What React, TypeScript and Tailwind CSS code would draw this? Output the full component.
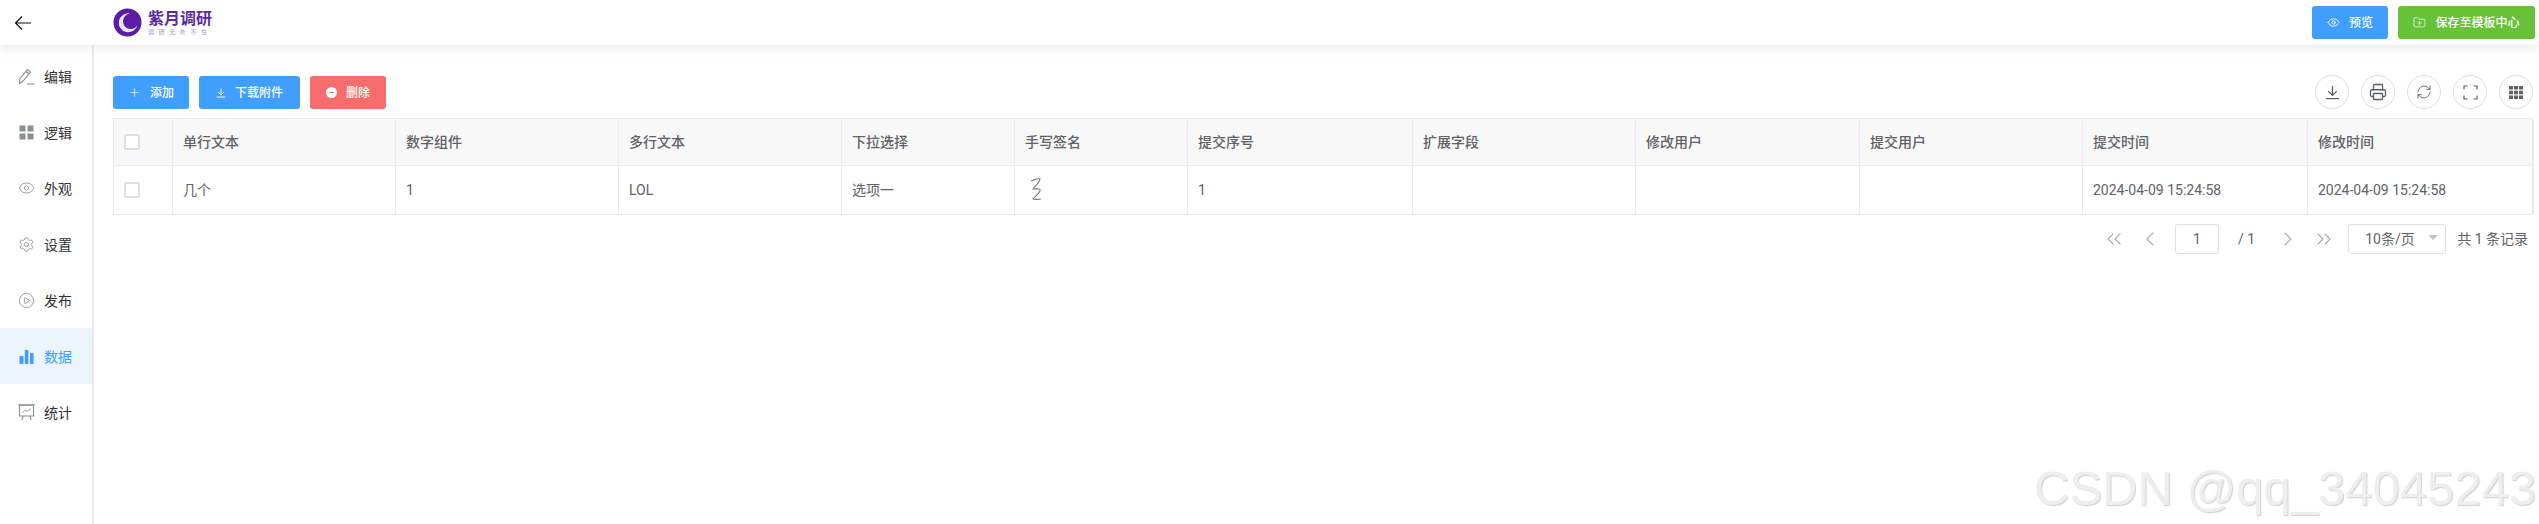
import type { ReactNode } from "react";
import { ChevronLeft, ChevronRight, ChevronsLeft, ChevronsRight, CirclePlay, Eye, FolderPlus, Plus, Printer, RefreshCw, Settings } from "lucide-react";

const FONT = "font-['Roboto','Noto_Sans_CJK_SC',sans-serif]";
const COLS = "grid-cols-[59px_223px_223px_223px_173px_173px_225px_223px_224px_223px_225px_226px]";

function PencilIcon() {
  return (
    <svg width="17" height="17" viewBox="0 0 17 17" fill="none" stroke="#8a8d93" strokeWidth="1.1">
      <path d="M1.5 15.5 2 10.5 9.5 1.5 12.5 4 5 13 1.5 15.5Z" />
      <path d="M8 3.5 11 6" />
      <path d="M9 16h7.5" />
    </svg>
  );
}

function GridIcon() {
  return (
    <svg width="15" height="15" viewBox="0 0 15 15" fill="#8a8d93">
      <rect x="0.5" y="0.5" width="6" height="6" />
      <rect x="8.5" y="0.5" width="6" height="6" />
      <rect x="0.5" y="8.5" width="6" height="6" />
      <rect x="8.5" y="8.5" width="6" height="6" />
    </svg>
  );
}

function BarsIcon() {
  return (
    <svg width="15" height="15" viewBox="0 0 15 15" fill="#409eff">
      <rect x="0.5" y="7" width="4" height="8" />
      <rect x="5.8" y="1" width="3.6" height="14" />
      <rect x="11" y="4" width="3.6" height="11" />
    </svg>
  );
}

function BoardIcon() {
  return (
    <svg width="17" height="17" viewBox="0 0 17 17" fill="none" stroke="#8a8d93" strokeWidth="1.1">
      <path d="M0.5 1h16" strokeWidth="1.6" />
      <path d="M1.5 1v11h14V1" />
      <path d="M4 9l3-3 2 1.5 4-3" strokeWidth="0.8" />
      <path d="M5 12l-1 4M12 12l1 4" />
    </svg>
  );
}

function ArrowDownLine({ size, strokeWidth }: { size: number; strokeWidth: number }) {
  return (
    <svg width={size} height={size} viewBox="0 0 16 16" fill="none" stroke="currentColor" strokeWidth={strokeWidth}>
      <path d="M8 1v9.5M3.5 6.5 8 11l4.5-4.5" />
      <path d="M1 14.5h14" />
    </svg>
  );
}

function Corners() {
  return (
    <svg width="15" height="15" viewBox="0 0 15 15" fill="none" stroke="currentColor" strokeWidth="1.2">
      <path d="M1 4.5V1h3.5M10.5 1H14v3.5M14 10.5V14h-3.5M4.5 14H1v-3.5" />
    </svg>
  );
}

function MoonLogo() {
  return (
    <svg width="29" height="29" viewBox="0 0 29 29">
      <circle cx="14.5" cy="14.5" r="14" fill="#5a1ea6" />
      <path d="M17 5.5A9.5 9.5 0 1 0 24.5 17 8 8 0 0 1 17 21 7.8 7.8 0 0 1 10 13 7.8 7.8 0 0 1 17 5.5Z" fill="#ece4f7" />
    </svg>
  );
}

function Signature() {
  return (
    <svg width="22" height="30" viewBox="0 0 22 30" fill="none" stroke="#777" strokeWidth="1.1">
      <path d="M6 6C9 5 13 3 15 4 15 7 10 11 8 14 11 14 16 13 15 16 13 20 9 22 8 24 11 25 14 24 16 24" />
    </svg>
  );
}

const NAV: { label: string; icon: ReactNode; active?: boolean }[] = [
  { label: "编辑", icon: <PencilIcon /> },
  { label: "逻辑", icon: <GridIcon /> },
  { label: "外观", icon: <Eye size={18} strokeWidth={1.2} color="#8a8d93" /> },
  { label: "设置", icon: <Settings size={17} strokeWidth={1.2} color="#8a8d93" /> },
  { label: "发布", icon: <CirclePlay size={17} strokeWidth={1.2} color="#8a8d93" /> },
  { label: "数据", icon: <BarsIcon />, active: true },
  { label: "统计", icon: <BoardIcon /> },
];

const COLUMNS = ["单行文本", "数字组件", "多行文本", "下拉选择", "手写签名", "提交序号", "扩展字段", "修改用户", "提交用户", "提交时间", "修改时间"];

function Checkbox() {
  return <span className="h-4 w-4 rounded-[2px] border-2 border-[#dcdfe6] bg-white" />;
}

function Cell({ children, head }: { children?: ReactNode; head?: boolean }) {
  return (
    <div className={`flex items-center border-r border-[#e8eaec] px-[10px] text-[14px] text-[#606266] last:border-r-2 ${head ? "font-medium" : ""}`}>
      {children}
    </div>
  );
}

function ToolButton({ children }: { children: ReactNode }) {
  return <button className="flex h-[34px] w-[34px] items-center justify-center rounded-full border border-[#dcdfe6] bg-white text-[#5a5d63]">{children}</button>;
}

function ActionButton({ color, width, icon, label }: { color: string; width: string; icon: ReactNode; label: string }) {
  return (
    <button className={`flex h-[33px] items-center justify-center gap-[9px] rounded-[3px] text-[12px] font-medium text-white ${color} ${width}`}>
      {icon}
      <span>{label}</span>
    </button>
  );
}

export default function App() {
  return (
    <div className={`relative flex h-[524px] w-[2539px] flex-col overflow-hidden bg-white ${FONT}`}>
      <header className="z-10 flex h-[45px] shrink-0 items-center bg-white pr-1 shadow-[0_2px_12px_rgba(0,0,0,0.1)]">
        <div className="flex w-[113px] shrink-0 pl-[14px]">
          <svg width="18" height="16" viewBox="0 0 18 16" fill="none" stroke="#111" strokeWidth="1.2">
            <path d="M17 8H1.5M8 1.5 1.5 8 8 14.5" />
          </svg>
        </div>
        <MoonLogo />
        <div className="ml-[6px] flex w-[64px] flex-col">
          <span className="text-[16px] leading-[18px] font-bold text-[#5a2ca0]">紫月调研</span>
          <span className="text-[6px] leading-[7px] tracking-[4.6px] whitespace-nowrap text-[#a98fd0]">调研无处不在</span>
        </div>
        <div className="ml-auto flex gap-[10px]">
          <ActionButton color="bg-[#409eff]" width="w-[76px]" icon={<Eye size={13} strokeWidth={1.6} />} label="预览" />
          <ActionButton color="bg-[#67c23a]" width="w-[137px]" icon={<FolderPlus size={13} strokeWidth={1.3} />} label="保存至模板中心" />
        </div>
      </header>

      <div className="flex min-h-0 flex-1">
        <aside className="w-[94px] shrink-0 border-r-2 border-[#ebebeb] pt-[3px]">
          {NAV.map((item) => (
            <div key={item.label} className={`flex h-[56px] items-center gap-[9px] pl-[18px] text-[14px] ${item.active ? "bg-[#ecf5ff] text-[#409eff]" : "text-[#303133]"}`}>
              <span className="flex w-[17px] justify-center">{item.icon}</span>
              <span className="pt-[2px]">{item.label}</span>
            </div>
          ))}
        </aside>

        <main className="min-w-0 flex-1 pt-[30px] pr-[6px] pl-[19px]">
          <div className="flex items-center justify-between">
            <div className="flex gap-[10px] pt-px">
              <ActionButton color="bg-[#409eff]" width="w-[76px]" icon={<Plus size={13} strokeWidth={1.4} />} label="添加" />
              <ActionButton color="bg-[#409eff]" width="w-[101px]" icon={<ArrowDownLine size={10} strokeWidth={1.5} />} label="下载附件" />
              <ActionButton
                color="bg-[#f76c6c]"
                width="w-[76px]"
                icon={<span className="flex h-[11px] w-[11px] items-center justify-center rounded-full bg-white"><span className="h-px w-[5px] bg-[#f76c6c]" /></span>}
                label="删除"
              />
            </div>
            <div className="flex gap-[12px]">
              <ToolButton><ArrowDownLine size={15} strokeWidth={1.3} /></ToolButton>
              <ToolButton><Printer size={18} strokeWidth={1.7} /></ToolButton>
              <ToolButton><RefreshCw size={16} strokeWidth={1.3} /></ToolButton>
              <ToolButton><Corners /></ToolButton>
              <ToolButton>
                <svg width="14" height="13" viewBox="0 0 14 13" fill="#606266">
                  <path d="M0 0h4v3.5H0zM5 0h4v3.5H5zM10 0h4v3.5h-4zM0 4.7h4v3.5H0zM5 4.7h4v3.5H5zM10 4.7h4v3.5h-4zM0 9.5h4V13H0zM5 9.5h4V13H5zM10 9.5h4V13h-4z" />
                </svg>
              </ToolButton>
            </div>
          </div>

          <div className="mt-[9px] border-t border-b border-l border-[#e8eaec]">
            <div className={`grid h-[47px] border-b border-[#e8eaec] bg-[#f8f8f9] ${COLS}`}>
              <Cell head><Checkbox /></Cell>
              {COLUMNS.map((name) => (
                <Cell key={name} head>{name}</Cell>
              ))}
            </div>
            <div className={`grid h-[48px] ${COLS}`}>
              <Cell><Checkbox /></Cell>
              <Cell>几个</Cell>
              <Cell>1</Cell>
              <Cell>LOL</Cell>
              <Cell>选项一</Cell>
              <Cell><Signature /></Cell>
              <Cell>1</Cell>
              <Cell />
              <Cell />
              <Cell />
              <Cell>2024-04-09 15:24:58</Cell>
              <Cell>2024-04-09 15:24:58</Cell>
            </div>
          </div>

          <div className="mt-[9px] flex h-[30px] items-center justify-end pr-[5px] text-[14px] text-[#606266]">
            <ChevronsLeft size={24} strokeWidth={1.1} color="#a8abb2" />
            <ChevronLeft size={24} strokeWidth={1.1} color="#a8abb2" className="ml-[12px]" />
            <span className="ml-[13px] flex h-[30px] w-[44px] items-center justify-center rounded-[3px] border border-[#dcdfe6]">1</span>
            <span className="ml-[19px]">/ 1</span>
            <ChevronRight size={24} strokeWidth={1.1} color="#a8abb2" className="ml-[21px]" />
            <ChevronsRight size={24} strokeWidth={1.1} color="#a8abb2" className="ml-[12px]" />
            <span className="ml-[12px] flex h-[30px] w-[98px] items-center rounded-[3px] border border-[#dcdfe6] pl-[16px]">
              10条/页
              <span className="mb-[3px] ml-[13px] h-0 w-0 border-x-[5px] border-t-[5px] border-x-transparent border-t-[#c0c4cc]" />
            </span>
            <span className="ml-[11px]">共 1 条记录</span>
          </div>
        </main>
      </div>

      <span className="absolute right-[3px] bottom-[11px] font-['Liberation_Sans',sans-serif] text-[49px] leading-none text-[#eeeeee] [text-shadow:1px_1px_1px_#d0d0d0]">
        CSDN @qq_34045243
      </span>
    </div>
  );
}
